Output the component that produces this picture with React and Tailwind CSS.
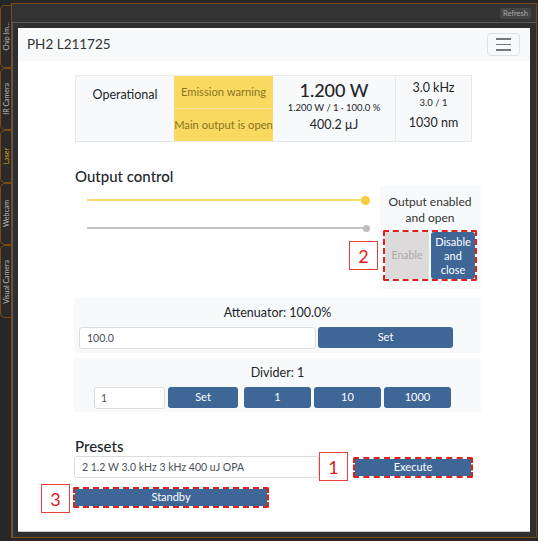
import React from 'react';

const tabs = [
    { label: 'Chip Im...', h: 'h-[63px]' },
    { label: 'IR Camera', h: 'h-[62px]' },
    { label: 'Laser', h: 'h-[53px]', active: true },
    { label: 'Webcam', h: 'h-[62px]' },
    { label: 'Visual Camera', h: 'h-[73px]' },
];

const Btn = ({ children, className = '' }) => (
    <button className={`bg-[#3e6798] text-white text-[11px] rounded-[3px] flex items-center justify-center ${className}`}>
        {children}
    </button>
);

const Tag = ({ n, className = '' }) => (
    <div className={`absolute w-[29px] h-[29px] border border-[#e8413a] bg-white text-[#e0201b] text-[18px] leading-none flex items-center justify-center ${className}`}>
        {n}
    </div>
);

const Slider = ({ yellow }) => (
    <div className="flex items-center h-[8px]">
        <div className={yellow ? 'flex-1 h-[2px] bg-[#fbdc6a]' : 'flex-1 h-[2px] bg-[#c4c4c4]'} />
        {yellow
            ? <div className="w-[9px] h-[9px] rounded-full bg-[#f7cd3c] -ml-[4px]" />
            : <div className="w-[7px] h-[7px] rounded-full bg-[#bdbdbd] -ml-[3px]" />}
    </div>
);

export default function App() {
    return (
        <div className="w-[538px] h-[541px] bg-[#272727] flex pt-[3px] overflow-hidden font-['Segoe_UI','Lato',sans-serif]">
            {/* side tabs */}
            <div className="w-[11px] flex flex-col pt-[2px]">
                {tabs.map(t => (
                    <div key={t.label} className={`${t.h} border border-r-0 border-[#7b4a17] rounded-l-[5px] bg-[#2a2a2a] flex items-center justify-center`}>
                        <span className={`[writing-mode:vertical-rl] rotate-180 text-[7px] whitespace-nowrap ${t.active ? 'text-[#d9a520]' : 'text-[#bdbdbd]'}`}>
                            {t.label}
                        </span>
                    </div>
                ))}
            </div>

            <div className="w-[526px] h-[535px] flex flex-col border border-[#7b4a17] bg-[#303030]">
                <div className="h-[18px] bg-[#333333] flex items-center justify-end pr-[5px]">
                    <div className="h-[11px] px-[3px] rounded-[2px] bg-[#454545] text-[#a8a8a8] text-[7.5px] leading-[11px]">Refresh</div>
                </div>

                <div className="flex-1 border-t border-l border-[#595959] bg-[#2f2f2f] pt-[5px] pl-[5px] pr-[6px] pb-[5px] flex">
                    <div className="flex-1 bg-white border-b border-[#c8c8c8] flex flex-col">
                        {/* navbar */}
                        <div className="h-[33px] bg-[#f8f9fa] flex items-center justify-between pl-[9px] pr-[10px]">
                            <span className="text-[13.5px] text-[#333]">PH2 L211725</span>
                            <button className="w-[33px] h-[23px] border border-[#dee2e6] rounded-[4px] flex flex-col items-center justify-center gap-[4px]">
                                <span className="w-[15px] h-[1.5px] bg-[#777]" />
                                <span className="w-[15px] h-[1.5px] bg-[#777]" />
                                <span className="w-[15px] h-[1.5px] bg-[#777]" />
                            </button>
                        </div>

                        <div className="pl-[56px] w-[463px] text-[#212529]">
                            {/* status table */}
                            <div className="mt-[14px] ml-[1px] w-[397px] h-[67px] border border-[#e6e8ea] bg-[#f8f9fa] flex text-[12.5px]">
                                <div className="w-[98px] flex justify-center pt-[11px] leading-[16px]">Operational</div>
                                <div className="w-[99px] bg-[#f9d95f] text-[#8c7424] text-[11.2px] whitespace-nowrap flex flex-col">
                                    <div className="flex-1 flex items-center justify-center border-b border-[#f3e2a0]">Emission warning</div>
                                    <div className="flex-1 flex items-center justify-center">Main output is open</div>
                                </div>
                                <div className="w-[123px] border-r border-[#e6e8ea] flex flex-col items-center pt-[2px]">
                                    <div className="text-[18px] leading-[24px] font-medium">1.200 W</div>
                                    <div className="text-[9.5px] leading-[12px]">1.200 W / 1 · 100.0 %</div>
                                    <div className="leading-[20px] mt-[1px]">400.2 µJ</div>
                                </div>
                                <div className="flex-1 flex flex-col items-center pt-[3px]">
                                    <div className="leading-[17px]">3.0 kHz</div>
                                    <div className="text-[9.5px] leading-[14px]">3.0 / 1</div>
                                    <div className="leading-[20px] mt-[3px]">1030 nm</div>
                                </div>
                            </div>

                            {/* output control */}
                            <div className="mt-[24px] ml-[1px] text-[15px] leading-[20px] font-medium">Output control</div>
                            <div className="flex">
                                <div className="flex-1 pl-[13px] pr-[10px] pt-[10px] flex flex-col gap-[20px]">
                                    <Slider yellow />
                                    <Slider />
                                </div>
                                <div className="relative w-[101px] bg-[#f8f9fa] pt-[8px] pb-[8px] pl-[3px] pr-[4px] flex flex-col items-center">
                                    <div className="text-[12px] leading-[16px] text-center text-[#333]">Output enabled<br />and open</div>
                                    <div className="mt-[4px] w-full border-2 border-dashed border-[#e0201b] rounded-[2px] flex gap-[2px]">
                                        <button className="flex-1 h-[47px] bg-[#dcdada] text-[#a9a9a9] text-[10.5px]">Enable</button>
                                        <Btn className="flex-1 h-[47px] text-[10.5px] leading-[14px] text-center">Disable<br />and<br />close</Btn>
                                    </div>
                                    <Tag n="2" className="-left-[31px] top-[55px]" />
                                </div>
                            </div>

                            {/* attenuator */}
                            <div className="mt-[9px] h-[55px] bg-[#f8f9fa] pl-[5px] pt-[6px]">
                                <div className="text-center text-[12.5px] leading-[18px] pr-[5px]">Attenuator: 100.0%</div>
                                <div className="mt-[5px] flex gap-[2px]">
                                    <input readOnly value="100.0" className="w-[237px] h-[22px] border border-[#dadde0] rounded-[3px] bg-white px-[7px] text-[10.5px] text-[#495057] outline-none" />
                                    <Btn className="w-[135px] h-[21px]">Set</Btn>
                                </div>
                            </div>

                            {/* divider */}
                            <div className="mt-[5px] h-[54px] bg-[#f8f9fa] pl-[20px] pt-[6px]">
                                <div className="text-center text-[12.5px] leading-[18px] pr-[20px]">Divider: 1</div>
                                <div className="mt-[5px] flex">
                                    <input readOnly value="1" className="w-[71px] h-[22px] border border-[#dadde0] rounded-[3px] bg-white px-[6px] text-[10.5px] text-[#495057] outline-none" />
                                    <Btn className="w-[70px] h-[21px] ml-[3px]">Set</Btn>
                                    <Btn className="w-[67px] h-[21px] ml-[6px]">1</Btn>
                                    <Btn className="w-[67px] h-[21px] ml-[3px]">10</Btn>
                                    <Btn className="w-[67px] h-[21px] ml-[3px]">1000</Btn>
                                </div>
                            </div>

                            {/* presets */}
                            <div className="mt-[24px] ml-[1px] text-[15px] leading-[20px] font-medium">Presets</div>
                            <div className="relative flex items-center">
                                <input readOnly value="2 1.2 W 3.0 kHz 3 kHz 400 uJ OPA" className="w-[245px] h-[22px] border border-[#dadde0] rounded-[3px] bg-white px-[7px] text-[10.5px] text-[#495057] outline-none" />
                                <div className="ml-[34px] border-2 border-dashed border-[#e0201b] rounded-[2px]">
                                    <Btn className="w-[116px] h-[17px] rounded-none">Execute</Btn>
                                </div>
                                <Tag n="1" className="left-[245px] -top-[4px]" />
                            </div>
                            <div className="relative mt-[9px] -ml-[1px] w-[196px] border-2 border-dashed border-[#e0201b] rounded-[2px]">
                                <Btn className="w-full h-[17px] rounded-none">Standby</Btn>
                                <Tag n="3" className="-left-[34px] -top-[5px]" />
                            </div>
                        </div>
                    </div>
                </div>
            </div>
        </div>
    );
}
